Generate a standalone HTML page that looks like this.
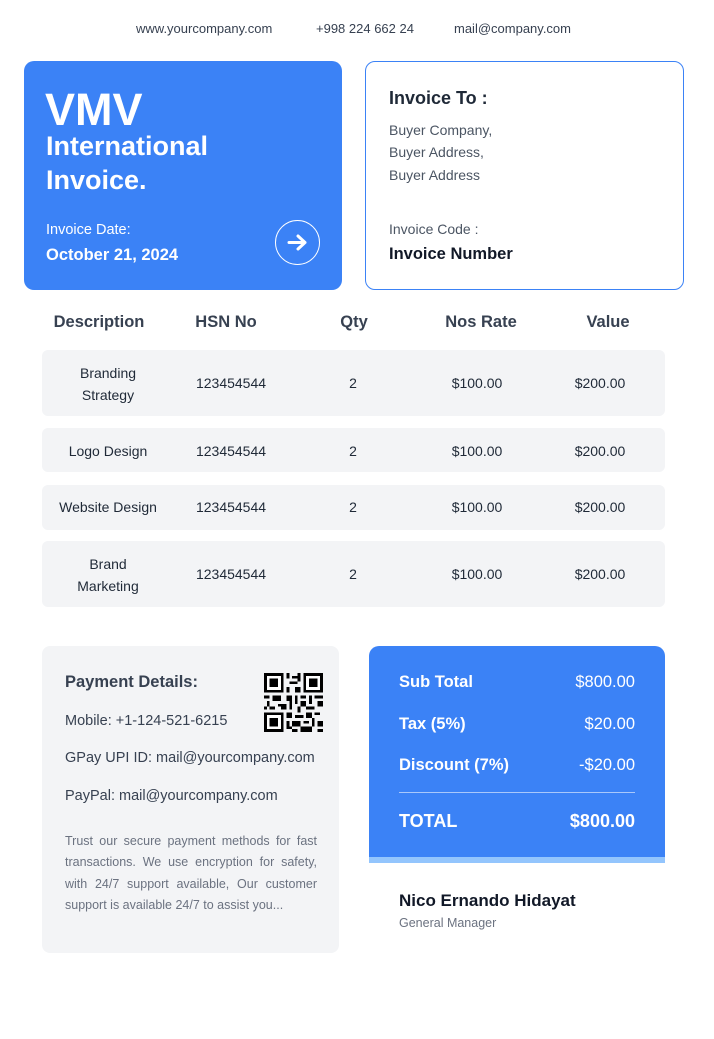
<!DOCTYPE html>
<html><head><meta charset="utf-8"><style>
*{margin:0;padding:0;box-sizing:border-box}
body{width:714px;height:1039px;background:#fff;font-family:"Liberation Sans","DejaVu Sans",sans-serif;color:#1f2937;position:relative;overflow:hidden}
.a{position:absolute;line-height:20px;white-space:nowrap}
.c{transform:translateX(-50%);text-align:center}
.r{transform:translateX(-100%)}
.row{position:absolute;left:42px;width:623px;background:#f3f4f6;border-radius:6px}
.w{color:#fff}
.t{font-size:14px}
</style></head><body>
<div class="a" style="top:19px;left:136px;font-size:13px;color:#374151">www.yourcompany.com</div>
<div class="a" style="top:19px;left:316px;font-size:13px;color:#374151">+998 224 662 24</div>
<div class="a" style="top:19px;left:454px;font-size:13px;color:#374151">mail@company.com</div>

<div style="position:absolute;left:24px;top:61px;width:318px;height:229px;background:#3b82f6;border-radius:10px"></div>
<div class="a w" style="top:87px;left:45px;font-size:45px;line-height:45px;font-weight:bold">VMV</div>
<div class="a w" style="top:131px;left:46px;font-size:27px;line-height:30px;font-weight:bold">International</div>
<div class="a w" style="top:165px;left:46px;font-size:27px;line-height:30px;font-weight:bold">Invoice.</div>
<div class="a w" style="top:220px;left:46px;font-size:14.5px">Invoice Date:</div>
<div class="a w" style="top:245px;left:46px;font-size:16.5px;font-weight:bold">October 21, 2024</div>
<div style="position:absolute;left:275px;top:220px;width:45px;height:45px;border:1.5px solid #fff;border-radius:50%"></div>
<svg style="position:absolute;left:287px;top:233px" width="21" height="19" viewBox="0 0 21 19"><path d="M2 9.5H18M11 3l7 6.5-7 6.5" stroke="#fff" stroke-width="3" fill="none" stroke-linecap="round" stroke-linejoin="round"/></svg>

<div style="position:absolute;left:365px;top:61px;width:319px;height:229px;border:1px solid #3b82f6;border-radius:10px"></div>
<div class="a" style="top:88px;left:389px;font-size:18px;font-weight:bold;color:#1f2937">Invoice To :</div>
<div class="a" style="top:120px;left:389px;font-size:14px;color:#4b5563">Buyer Company,</div>
<div class="a" style="top:142px;left:389px;font-size:14px;color:#4b5563">Buyer Address,</div>
<div class="a" style="top:165px;left:389px;font-size:14px;color:#4b5563">Buyer Address</div>
<div class="a" style="top:219px;left:389px;font-size:14px;color:#4b5563">Invoice Code :</div>
<div class="a" style="top:244px;left:389px;font-size:16.5px;font-weight:bold;color:#111827">Invoice Number</div>

<div class="a c" style="top:312px;left:99px;font-size:16.5px;font-weight:bold;color:#374151">Description</div>
<div class="a c" style="top:312px;left:226px;font-size:16.5px;font-weight:bold;color:#374151">HSN No</div>
<div class="a c" style="top:312px;left:354px;font-size:16.5px;font-weight:bold;color:#374151">Qty</div>
<div class="a c" style="top:312px;left:481px;font-size:16.5px;font-weight:bold;color:#374151">Nos Rate</div>
<div class="a c" style="top:312px;left:608px;font-size:16.5px;font-weight:bold;color:#374151">Value</div>

<div class="row" style="top:350px;height:66px"></div>
<div class="row" style="top:428px;height:44px"></div>
<div class="row" style="top:485px;height:45px"></div>
<div class="row" style="top:541px;height:66px"></div>

<div class="a c t" style="top:362px;left:108px;line-height:22px">Branding<br>Strategy</div>
<div class="a c t" style="top:441px;left:108px">Logo Design</div>
<div class="a c t" style="top:497px;left:108px">Website Design</div>
<div class="a c t" style="top:553px;left:108px;line-height:22px">Brand<br>Marketing</div>

<div class="a c t" style="top:373px;left:231px">123454544</div>
<div class="a c t" style="top:441px;left:231px">123454544</div>
<div class="a c t" style="top:497px;left:231px">123454544</div>
<div class="a c t" style="top:564px;left:231px">123454544</div>
<div class="a c t" style="top:373px;left:353px">2</div>
<div class="a c t" style="top:441px;left:353px">2</div>
<div class="a c t" style="top:497px;left:353px">2</div>
<div class="a c t" style="top:564px;left:353px">2</div>
<div class="a c t" style="top:373px;left:477px">$100.00</div>
<div class="a c t" style="top:441px;left:477px">$100.00</div>
<div class="a c t" style="top:497px;left:477px">$100.00</div>
<div class="a c t" style="top:564px;left:477px">$100.00</div>
<div class="a c t" style="top:373px;left:600px">$200.00</div>
<div class="a c t" style="top:441px;left:600px">$200.00</div>
<div class="a c t" style="top:497px;left:600px">$200.00</div>
<div class="a c t" style="top:564px;left:600px">$200.00</div>

<div style="position:absolute;left:42px;top:646px;width:297px;height:307px;background:#f3f4f6;border-radius:8px"></div>
<div class="a" style="top:672px;left:65px;font-size:16.5px;font-weight:bold;color:#374151">Payment Details:</div>
<div class="a" style="top:711px;left:65px;font-size:14.5px;color:#374151">Mobile: +1-124-521-6215</div>
<div class="a" style="top:748px;left:65px;font-size:14.5px;color:#374151">GPay UPI ID: mail@yourcompany.com</div>
<div class="a" style="top:786px;left:65px;font-size:14.5px;color:#374151">PayPal: mail@yourcompany.com</div>
<div style="position:absolute;top:831px;left:65px;width:252px;font-size:12.5px;line-height:21.3px;color:#6b7280;text-align:justify">Trust our secure payment methods for fast transactions. We use encryption for safety, with 24/7 support available, Our customer support is available 24/7 to assist you...</div>
<svg style="position:absolute;left:264px;top:673px" width="59" height="59" viewBox="0 0 21 21" shape-rendering="crispEdges">
<g fill="#000"><path d="M0 0h7v7H0zM14 0h7v7h-7zM0 14h7v7H0z"/></g>
<g fill="#fff"><path d="M1 1h5v5H1zM15 1h5v5h-5zM1 15h5v5H1z"/></g>
<g fill="#000"><path d="M2 2h3v3H2zM16 2h3v3h-3zM2 16h3v3H2z"/>
<path d="M8 0h1v2H8zM10 1h2v1h-2zM9 3h3v1H9zM8 5h1v2H8zM11 5h2v2h-2zM12 0h1v3h-1zM0 8h2v1H0zM3 8h3v2H3zM8 8h2v2H8zM11 8h1v3h-1zM13 8h2v1h-2zM16 8h1v3h-1zM18 8h3v1h-3zM1 10h1v2H1zM5 11h3v1H5zM9 10h1v3H9zM13 10h2v2h-2zM19 10h2v2h-2zM0 12h1v1H0zM2 12h2v1H2zM6 12h2v1H6zM12 12h1v2h-1zM15 12h3v1h-3zM8 14h2v2H8zM11 15h3v1h-3zM15 14h2v2h-2zM18 14h2v1h-2zM8 17h1v3H8zM10 17h3v2h-3zM14 17h2v1h-2zM17 16h1v3h-1zM19 17h2v2h-2zM10 20h2v1h-2zM13 19h4v2h-4zM19 20h2v1h-2zM9 19h1v1H9z"/></g>
</svg>

<div style="position:absolute;left:369px;top:646px;width:296px;height:217px;background:#3b82f6;border-radius:10px 10px 0 0"></div>
<div style="position:absolute;left:369px;top:857px;width:296px;height:6px;background:#93c5fd"></div>
<div class="a w" style="top:672px;left:399px;font-size:16.5px;font-weight:bold">Sub Total</div>
<div class="a w r" style="top:672px;left:635px;font-size:16.5px">$800.00</div>
<div class="a w" style="top:714px;left:399px;font-size:16.5px;font-weight:bold">Tax (5%)</div>
<div class="a w r" style="top:714px;left:635px;font-size:16.5px">$20.00</div>
<div class="a w" style="top:755px;left:399px;font-size:16.5px;font-weight:bold">Discount (7%)</div>
<div class="a w r" style="top:755px;left:635px;font-size:16.5px">-$20.00</div>
<div style="position:absolute;left:399px;top:792px;width:236px;height:1px;background:#a9c8fb"></div>
<div class="a w" style="top:811px;left:399px;font-size:18px;font-weight:bold">TOTAL</div>
<div class="a w r" style="top:811px;left:635px;font-size:18px;font-weight:bold">$800.00</div>
<div class="a" style="top:891px;left:399px;font-size:17px;font-weight:bold;color:#111827">Nico Ernando Hidayat</div>
<div class="a" style="top:913px;left:399px;font-size:12.5px;color:#6b7280">General Manager</div>
</body></html>
